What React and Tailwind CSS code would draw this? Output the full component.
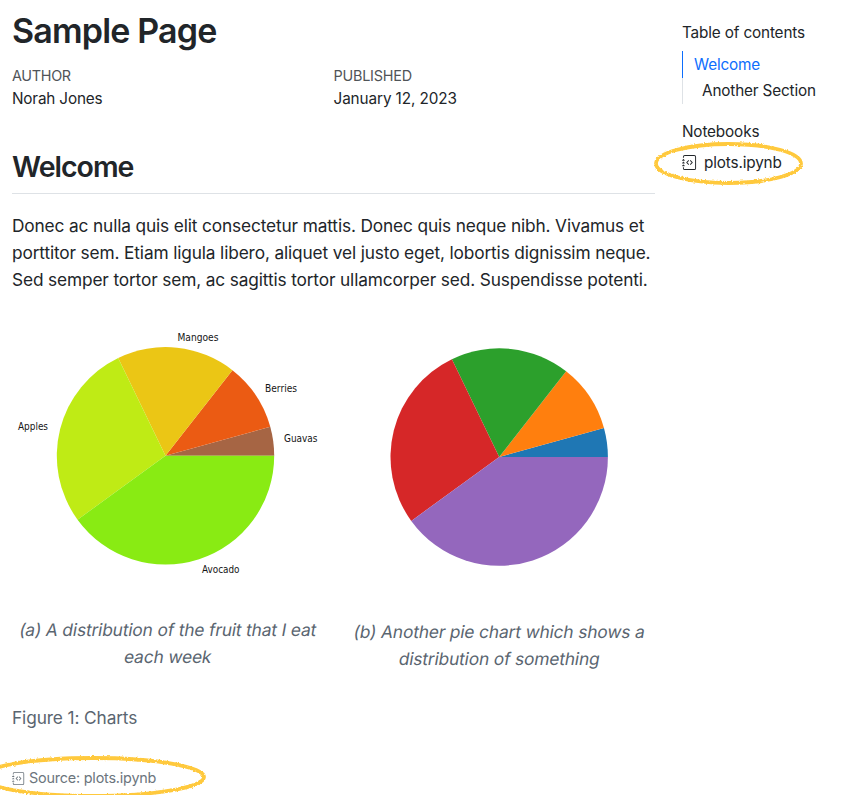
import { BsJournalCode } from "react-icons/bs";

const SLICES_A = ["#a66544", "#eb5b13", "#ebc615", "#bfeb15", "#89eb13"];
const SLICES_B = ["#1f77b4", "#ff7f0e", "#2ca02c", "#d62728", "#9467bd"];
const ANGLES = [0, 15.5, 52, 115.8, 216, 360];

function Slices({ cx, cy, r, colors }) {
  const point = (deg) => {
    const a = (deg * Math.PI) / 180;
    return `${(cx + r * Math.cos(a)).toFixed(2)} ${(cy - r * Math.sin(a)).toFixed(2)}`;
  };
  return colors.map((color, i) => (
    <path
      key={color}
      fill={color}
      d={`M${cx} ${cy}L${point(ANGLES[i])}A${r} ${r} 0 0 0 ${point(ANGLES[i + 1])}Z`}
    />
  ));
}

const LABELS = [
  ["Mangoes", 177.5, 340.8, 41],
  ["Berries", 265, 392.1, 32],
  ["Guavas", 284, 442.1, 33.5],
  ["Apples", 18, 430.4, 30],
  ["Avocado", 202, 572.8, 37.5],
];

function Marker({ className, width, height, id, seed }) {
  return (
    <svg className={className} width={width} height={height} aria-hidden="true">
      <filter id={id} x="-5%" y="-10%" width="110%" height="120%">
        <feTurbulence type="fractalNoise" baseFrequency="0.55" numOctaves="2" seed={seed} />
        <feDisplacementMap in="SourceGraphic" scale="2.8" xChannelSelector="R" yChannelSelector="G" />
      </filter>
      <ellipse
        cx={width / 2}
        cy={height / 2}
        rx={width / 2 - 3}
        ry={height / 2 - 3}
        fill="none"
        stroke="#ffc93c"
        strokeWidth="3.8"
        filter={`url(#${id})`}
      />
    </svg>
  );
}

function Slanted({ children }) {
  return <span className="block -skew-x-[10deg]">{children}</span>;
}

export default function App() {
  return (
    <div className="flex h-[795px] w-[844px] overflow-hidden bg-white pl-3 font-['Inter',sans-serif] text-[#212529]">
      <main className="w-[643px] shrink-0">
        <h1 className="h-[61px] text-[34px] leading-[61px] font-semibold tracking-[-0.82px] whitespace-nowrap">Sample Page</h1>
        <div className="grid grid-cols-2 pt-1">
          <div>
            <div className="h-[22px] text-[14.4px] leading-[22px] tracking-[-0.3px] text-[#505458]">AUTHOR</div>
            <div className="h-[23px] text-[15.3px] leading-[23px] tracking-[-0.17px]">Norah Jones</div>
          </div>
          <div>
            <div className="h-[22px] text-[14.4px] leading-[22px] tracking-[-0.22px] text-[#505458]">PUBLISHED</div>
            <div className="h-[23px] text-[15.3px] leading-[23px] tracking-[-0.1px]">January 12, 2023</div>
          </div>
        </div>
        <h2 className="mt-9 h-12 border-b border-[#dee2e6] text-[28.5px] leading-[42px] font-semibold tracking-[-1px]">Welcome</h2>
        <p className="mt-[18px] text-[17.3px] leading-[27px] tracking-[-0.14px] whitespace-nowrap">
          Donec ac nulla quis elit consectetur mattis. Donec quis neque nibh. Vivamus et
          <br />
          porttitor sem. Etiam ligula libero, aliquet vel justo eget, lobortis dignissim neque.
          <br />
          Sed semper tortor sem, ac sagittis tortor ullamcorper sed. Suspendisse potenti.
        </p>
        <figure>
          <svg className="mt-[27px] block" width="643" height="264" viewBox="12 320 643 264">
            <Slices cx={165.5} cy={455.8} r={108.7} colors={SLICES_A} />
            <Slices cx={499.2} cy={457} r={108.7} colors={SLICES_B} />
            {LABELS.map(([label, x, y, width]) => (
              <text
                key={label}
                x={x}
                y={y}
                textLength={width}
                lengthAdjust="spacingAndGlyphs"
                className="fill-[#151515] font-['DejaVu_Sans',sans-serif] text-[9.6px]"
              >
                {label}
              </text>
            ))}
          </svg>
          <div className="flex h-[108px] justify-between pt-8 text-center text-[17.3px] leading-[27px] tracking-[-0.12px] whitespace-nowrap text-[#5a6570]">
            <figcaption className="w-[312px]">
              <Slanted>(a) A distribution of the fruit that I eat</Slanted>
              <Slanted>each week</Slanted>
            </figcaption>
            <figcaption className="mt-0.5 w-[311px]">
              <Slanted>(b) Another pie chart which shows a</Slanted>
              <Slanted>distribution of something</Slanted>
            </figcaption>
          </div>
          <figcaption className="mt-3 text-[17.3px] leading-[27px] tracking-[-0.12px] text-[#5a6570]">Figure 1: Charts</figcaption>
        </figure>
        <div className="relative mt-[35px] flex h-6 items-center gap-1 text-[14.4px] tracking-[-0.2px] text-[#6c757d]">
          <BsJournalCode size={13} />
          <span>Source: plots.ipynb</span>
          <Marker id="rough-source" seed="4" width={228} height={44} className="absolute -top-[11px] -left-[33px]" />
        </div>
      </main>
      <aside className="ml-[27px] w-[160px] shrink-0 pt-5 text-[15.3px] tracking-[-0.15px] whitespace-nowrap">
        <h2 className="h-[31px] leading-[25px]">Table of contents</h2>
        <nav>
          <a className="block h-[27px] border-l border-[#0d6efd] pl-[11px] leading-[27px] text-[#0d6efd]">Welcome</a>
          <a className="block h-[26px] border-l border-[#dee2e6] pl-[19px] leading-[26px]">Another Section</a>
        </nav>
        <h2 className="mt-4 h-6 leading-6">Notebooks</h2>
        <div className="relative mt-[7px] flex h-6 items-center gap-[7px]">
          <BsJournalCode size={15} className="mb-0.5" />
          <span>plots.ipynb</span>
          <Marker id="rough-notebook" seed="9" width={151} height={45} className="absolute -top-[10px] -left-[29px]" />
        </div>
      </aside>
    </div>
  );
}
